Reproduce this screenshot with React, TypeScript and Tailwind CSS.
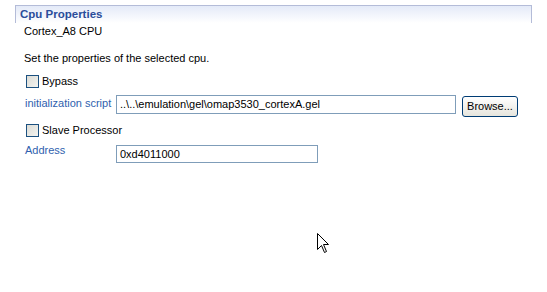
import React from "react";

export default function App() {
  const font = { fontFamily: "'Liberation Sans', Arial, sans-serif" };
  return (
    <div className="w-[547px] h-[292px] bg-white relative overflow-hidden text-[11px] text-black" style={font}>
      <div className="pt-[5px] pl-[15px] pr-[15px]">
        <div className="h-[18px] border-t border-l border-r border-[#b4bcd8] bg-gradient-to-b from-[#e4eaf8] to-white pl-[4px] flex items-center">
          <span className="font-bold text-[#2a4d9a] text-[11.5px] leading-none mt-[1px]">Cpu Properties</span>
        </div>
      </div>
      <div className="pl-[24px] mt-[2px] leading-[13px] whitespace-nowrap">Cortex_A8 CPU</div>
      <div className="pl-[24px] mt-[14px] leading-[13px] whitespace-nowrap">Set the properties of the selected cpu.</div>
      <div className="pl-[26px] mt-[10px] flex items-center gap-[3px] h-[13px]">
        <div className="w-[13px] h-[13px] border border-[#1c5180] bg-gradient-to-br from-[#dcdcd6] to-[#f4f4f0]" />
        <span className="leading-[13px] whitespace-nowrap">Bypass</span>
      </div>
      <div className="flex items-start pl-[25px] mt-[7px]">
        <span className="text-[#2f5fae] w-[91px] leading-[13px] mt-[2px] whitespace-nowrap">initialization script</span>
        <div className="w-[340px] h-[19px] border border-[#7f9db9] flex items-center pl-[3px] leading-[13px] whitespace-nowrap">..\..\emulation\gel\omap3530_cortexA.gel</div>
        <button className="ml-[6px] w-[56px] h-[21px] mt-[1px] rounded-[3px] border border-[#003c74] bg-gradient-to-b from-white to-[#e6e5dd] flex items-center justify-center leading-[13px] whitespace-nowrap">Browse...</button>
      </div>
      <div className="pl-[26px] mt-[7px] flex items-center gap-[3px] h-[13px]">
        <div className="w-[13px] h-[13px] border border-[#1c5180] bg-gradient-to-br from-[#dcdcd6] to-[#f4f4f0]" />
        <span className="leading-[13px] whitespace-nowrap">Slave Processor</span>
      </div>
      <div className="flex items-start pl-[25px] mt-[8px]">
        <span className="text-[#2f5fae] w-[91px] leading-[13px] mt-[-1px] whitespace-nowrap">Address</span>
        <div className="w-[202px] h-[18px] border border-[#7f9db9] flex items-center pl-[3px] leading-[13px] whitespace-nowrap">0xd4011000</div>
      </div>
      <svg className="absolute left-[317px] top-[233px]" width="13" height="21" viewBox="0 0 13 21">
        <path d="M0.5 0.5 L0.5 16.5 L4.5 12.5 L7.5 19.5 L9.5 18.5 L6.5 11.5 L11.5 11.5 Z" fill="white" stroke="black" strokeWidth="1" />
      </svg>
    </div>
  );
}
